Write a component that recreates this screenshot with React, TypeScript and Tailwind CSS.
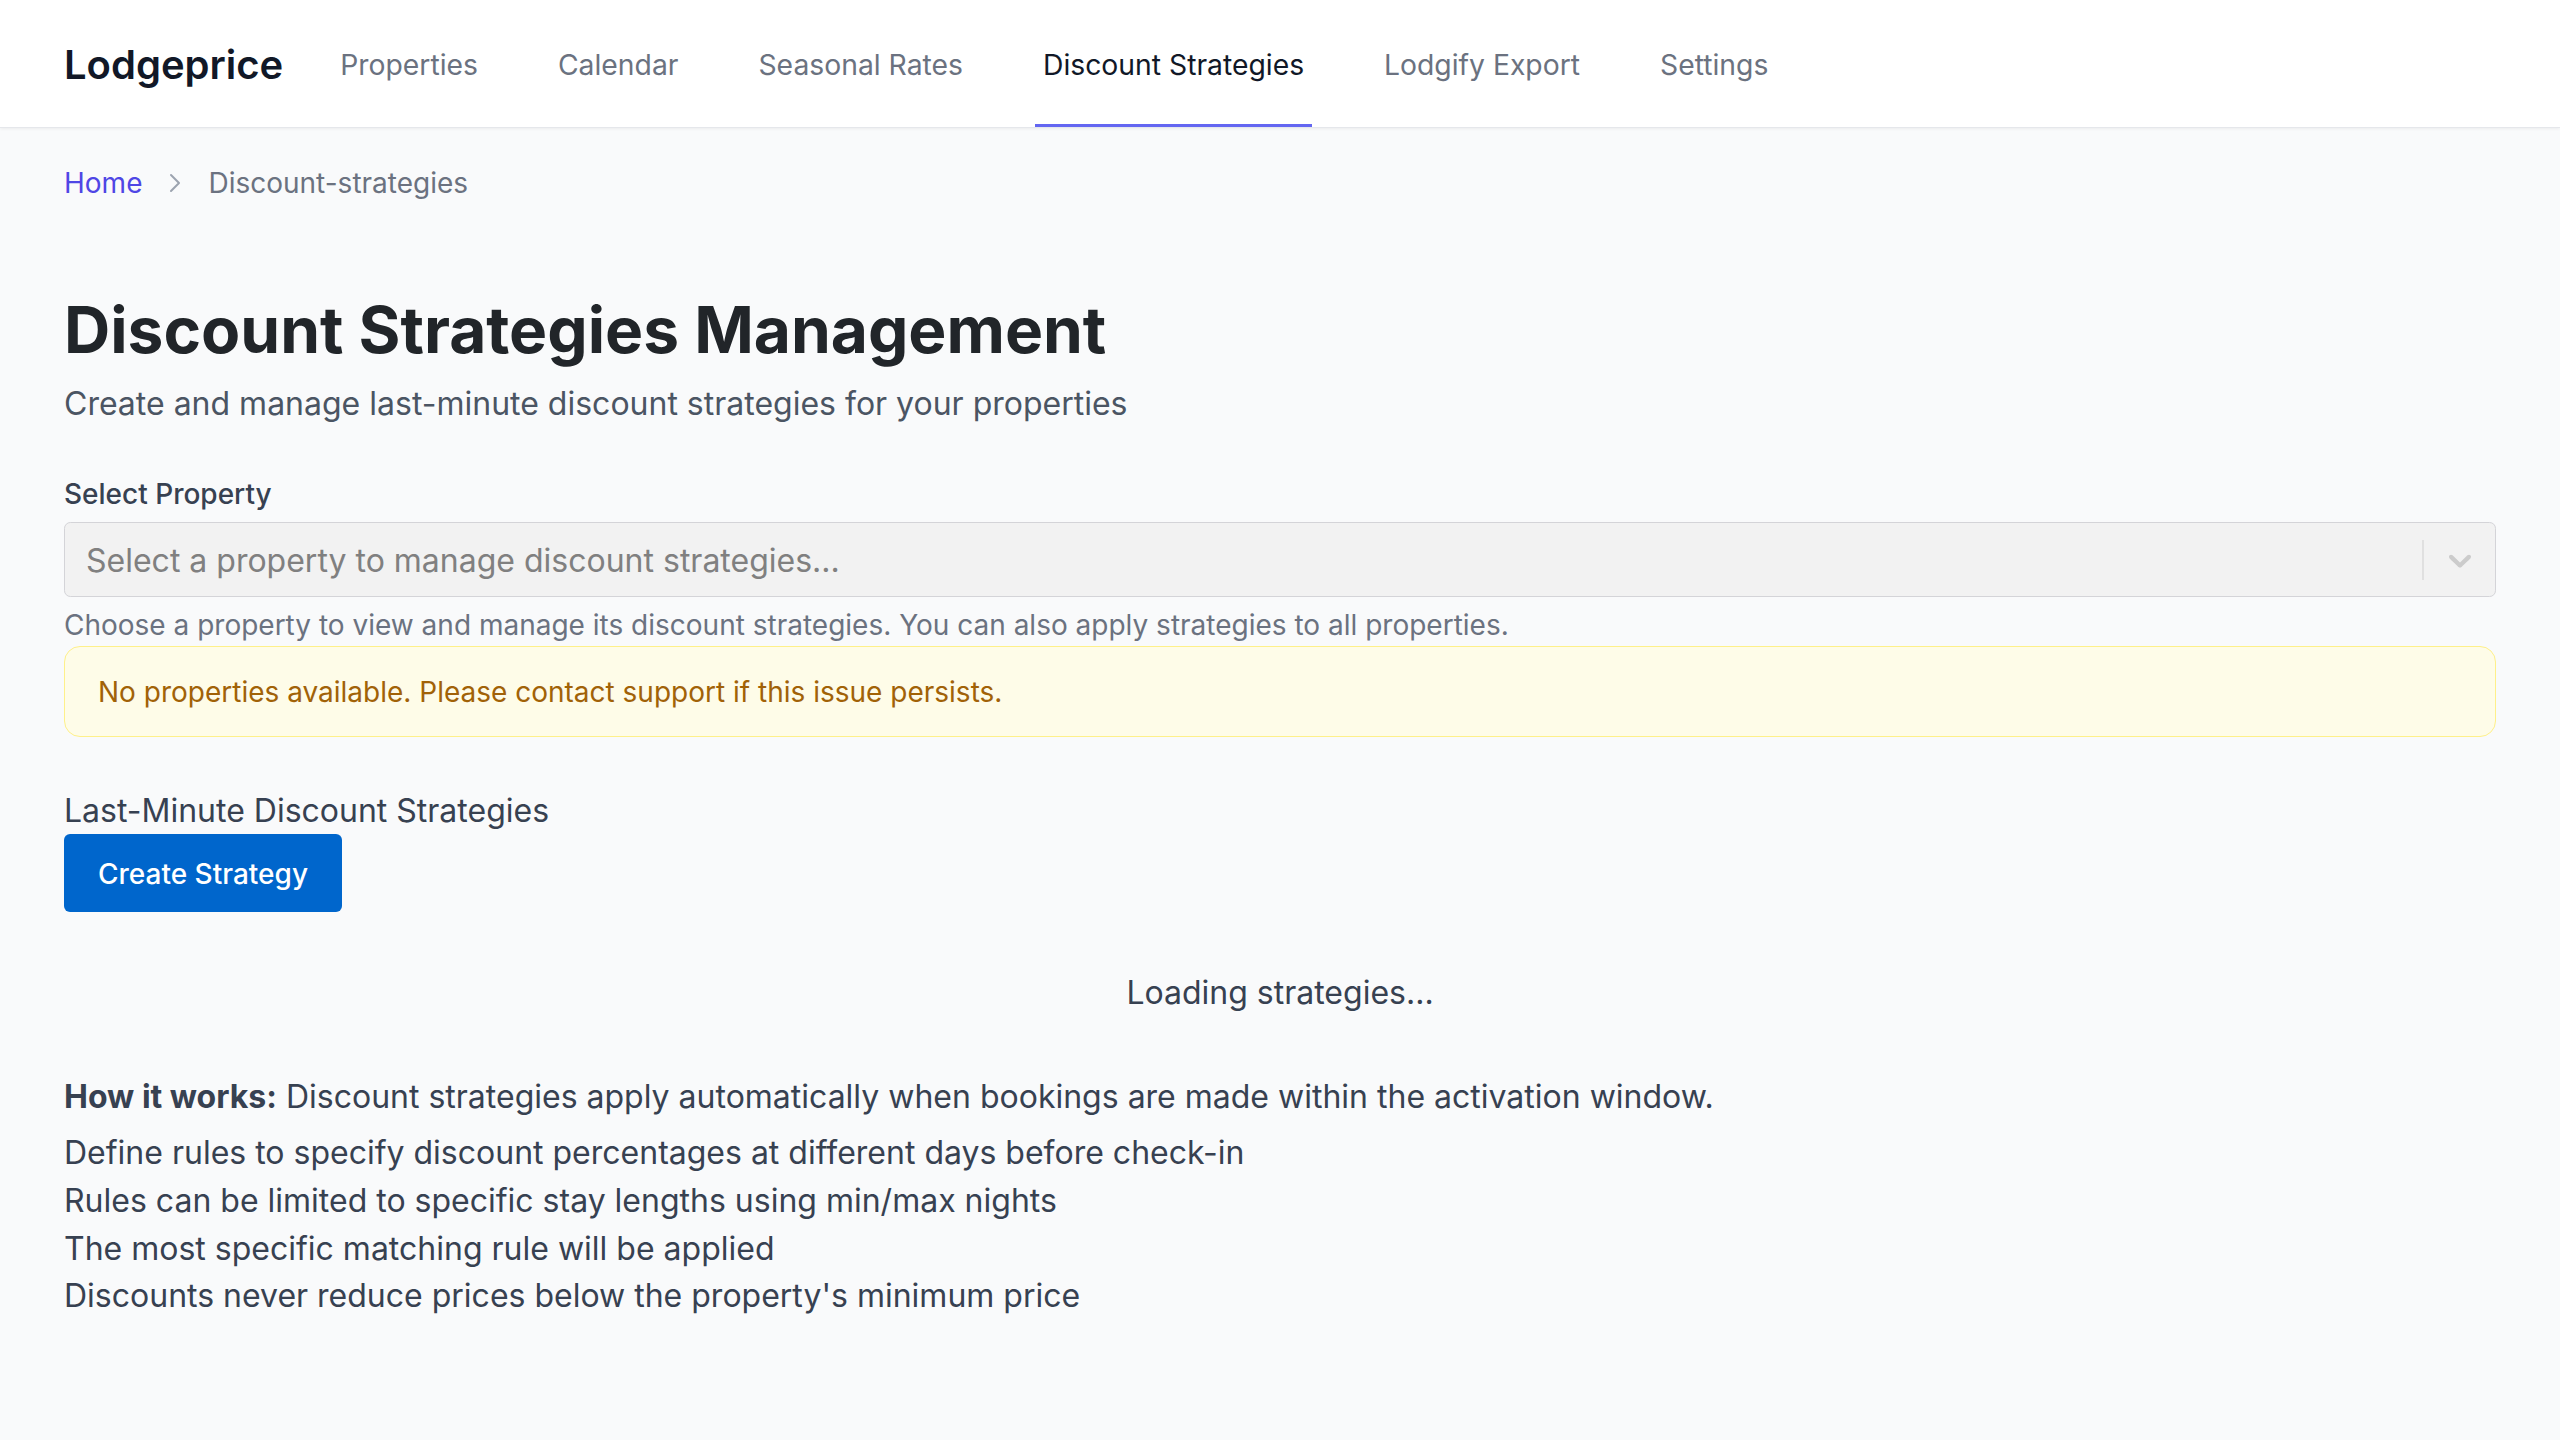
import React from "react";

const navItems = [
  { label: "Properties", active: false },
  { label: "Calendar", active: false },
  { label: "Seasonal Rates", active: false },
  { label: "Discount Strategies", active: true },
  { label: "Lodgify Export", active: false },
  { label: "Settings", active: false },
];

const rules = [
  "Define rules to specify discount percentages at different days before check-in",
  "Rules can be limited to specific stay lengths using min/max nights",
  "The most specific matching rule will be applied",
  "Discounts never reduce prices below the property's minimum price",
];

export default function App() {
  return (
    <div
      className="min-h-screen bg-[#f9fafb]"
      style={{ fontFamily: "Inter, 'Noto Sans', sans-serif" }}
    >
      <nav className="h-[128px] bg-white border-b border-[#e5e7eb] shadow-[0_1px_3px_rgba(0,0,0,0.06)] flex items-stretch px-[64px]">
        <div className="flex items-center pt-[2px] mr-[49px] text-[40px] font-semibold text-[#111827]">
          Lodgeprice
        </div>
        <div className="flex items-stretch gap-[64px]">
          {navItems.map((n) => (
            <div
              key={n.label}
              className={
                n.active
                  ? "flex items-center px-[8px] text-[28.3px] text-[#111827] border-b-[3.5px] border-[#6366f1] pt-[5.5px]"
                  : "flex items-center px-[8px] text-[28.3px] text-[#6b7280] border-b-[3.5px] border-transparent pt-[5.5px]"
              }
            >
              {n.label}
            </div>
          ))}
        </div>
      </nav>

      <main className="px-[64px] pt-[35.5px]">
        <div className="flex items-center text-[28px] leading-[38.4px]">
          <span className="text-[#4f46e5]">Home</span>
          <svg
            className="mx-[25px]"
            width="16"
            height="22"
            viewBox="0 0 16 22"
            fill="none"
            stroke="#9ca3af"
            strokeWidth="2"
            strokeLinecap="round"
            strokeLinejoin="round"
          >
            <path d="M4 3l8 8-8 8" />
          </svg>
          <span className="text-[#6b7280]">Discount-strategies</span>
        </div>

        <h1 className="mt-[93px] text-[64px] leading-[69px] font-bold text-[#212529]">
          Discount Strategies Management
        </h1>
        <p className="mt-[18px] text-[32px] leading-[43px] text-[#4b5563]">
          Create and manage last-minute discount strategies for your properties
        </p>

        <div className="mt-[50px] text-[28px] leading-[38.4px] font-medium text-[#374151]">
          Select Property
        </div>
        <div className="mt-[9px] h-[75px] rounded-[6.4px] border-[1.6px] border-[#d4d4d8] bg-[#f2f2f2] flex items-center">
          <div className="flex-1 pl-[21px] pt-[2px] text-[32px] text-[#808080]">
            Select a property to manage discount strategies...
          </div>
          <div className="w-[1.6px] h-[40px] bg-[#e0e0e0]" />
          <div className="flex items-center pl-[17px] pr-[16px]">
            <svg width="38" height="38" viewBox="0 0 20 20" fill="#cccccc">
              <path d="M4.516 7.548c0.436-0.446 1.043-0.481 1.576 0l3.908 3.747 3.908-3.747c0.533-0.481 1.141-0.446 1.574 0 0.436 0.445 0.408 1.197 0 1.615-0.406 0.418-4.695 4.502-4.695 4.502-0.217 0.223-0.502 0.335-0.787 0.335s-0.57-0.112-0.789-0.335c0 0-4.287-4.084-4.695-4.502s-0.436-1.17 0-1.615z" />
            </svg>
          </div>
        </div>
        <p className="mt-[12px] text-[28px] leading-[33.6px] text-[#6b7280]">
          Choose a property to view and manage its discount strategies. You can also apply strategies to all properties.
        </p>

        <div className="mt-[3.5px] h-[91px] rounded-[16px] border-[1.6px] border-[#fef08a] bg-[#fefce8] flex items-center px-[33px] text-[28px] text-[#a16207]">
          No properties available. Please contact support if this issue persists.
        </div>

        <div className="mt-[52px] text-[32px] leading-[43px] text-[#374151]">
          Last-Minute Discount Strategies
        </div>
        <button className="mt-[2px] h-[78px] w-[278px] rounded-[6px] bg-[#0066cc] pt-[2px] text-white text-[28px] font-medium flex items-center justify-center">
          Create Strategy
        </button>

        <div className="mt-[59px] text-center text-[32px] leading-[43px] text-[#374151]">
          Loading strategies...
        </div>

        <p className="mt-[61px] text-[32px] leading-[43px] text-[#374151]">
          <strong className="font-bold">How it works:</strong> Discount strategies apply automatically when bookings are made within the activation window.
        </p>
        <ul className="mt-[11px]">
          {rules.map((r) => (
            <li key={r} className="text-[32px] leading-[47.6px] text-[#374151]">
              {r}
            </li>
          ))}
        </ul>
      </main>
    </div>
  );
}
